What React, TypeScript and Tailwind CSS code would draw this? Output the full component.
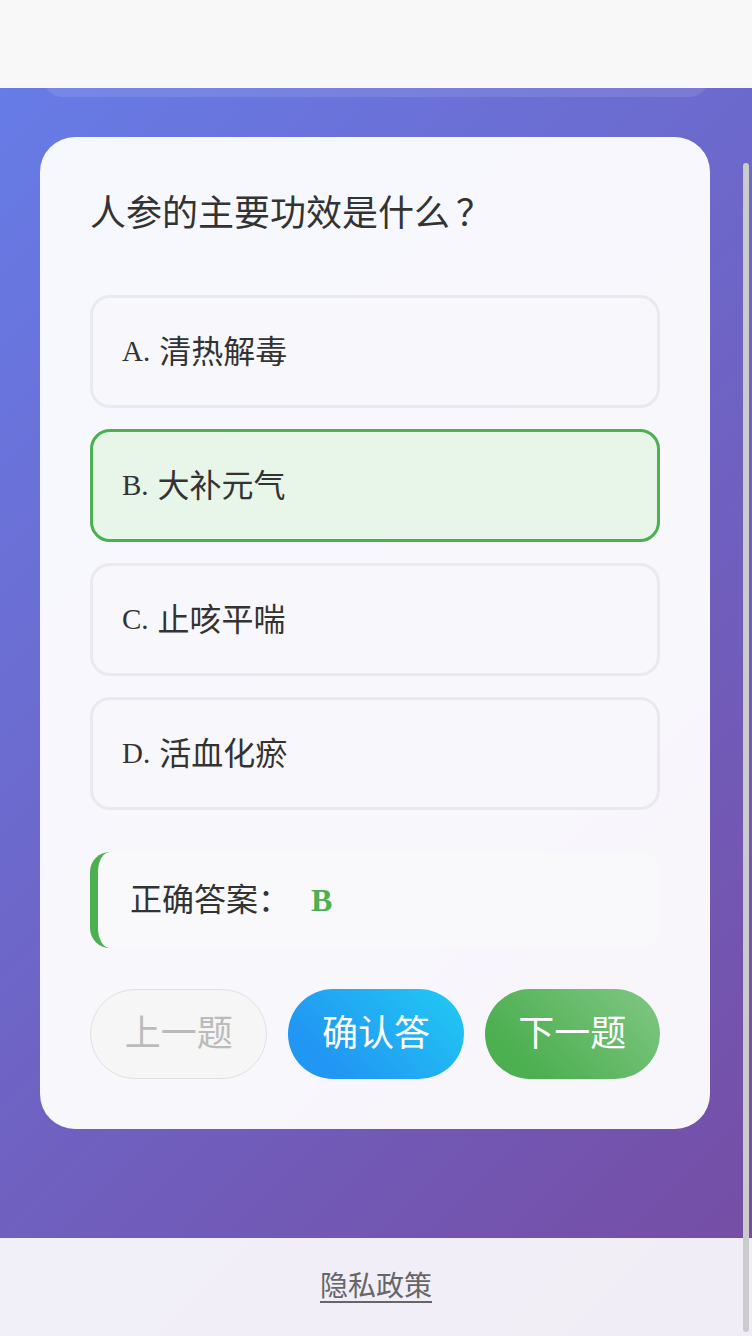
import React from "react";

const FONT = { fontFamily: '"Liberation Serif", "Noto Sans CJK SC", serif' };

const options = [
  { key: "A", text: "清热解毒", selected: false },
  { key: "B", text: "大补元气", selected: true },
  { key: "C", text: "止咳平喘", selected: false },
  { key: "D", text: "活血化瘀", selected: false },
];

export default function App() {
  return (
    <div
      className="relative min-h-[1336px] w-full flex flex-col bg-[linear-gradient(135deg,#667eea_0%,#764ba2_100%)] text-[#333]"
      style={FONT}
    >
      <div className="h-[88px] bg-[#f8f8f8]" />
      <div className="h-[9px] overflow-hidden ml-[43px] mr-[43px]">
        <div className="h-[40px] -mt-[31px] rounded-[20px] bg-white/10" />
      </div>

      <div className="mt-[40px] ml-[40px] mr-[42px] rounded-[35px] bg-white/95 p-[50px]">
        <h2 className="text-[36px] leading-[54px] font-normal text-[#333] mb-[54px]">
          人参的主要功效是什么<span className="ml-[6px]">？</span>
        </h2>

        <div className="flex flex-col gap-[21px]">
          {options.map((o) => (
            <div
              key={o.key}
              className={
                o.selected
                  ? "h-[113px] flex items-center rounded-[20px] border-[3px] border-[#4caf50] bg-[#e8f5e9] pl-[29px] text-[32px] text-[#333]"
                  : "h-[113px] flex items-center rounded-[20px] border-[3px] border-[#e9e9ee] bg-[#f8f8fc] pl-[29px] text-[32px] text-[#333]"
              }
            >
              <span className="text-[29px]">{o.key}.</span>
              <span className="ml-[9px]">{o.text}</span>
            </div>
          ))}
        </div>

        <div className="mt-[42px] h-[96px] rounded-[20px] border-l-[8px] border-[#4caf50] bg-[#f9f9fb] pl-[32px] text-[32px] flex items-center">
          <span className="text-[#333]">正确答案：</span>
          <span className="ml-[21px] font-bold text-[#4caf50]">B</span>
        </div>

        <div className="mt-[41px] flex gap-[21px]">
          <button
            className="flex-1 h-[90px] rounded-full border border-[#e0e0e0] bg-[#f6f6f6] text-[36px] text-[#bbbbbb] overflow-hidden"
            style={FONT}
          >
            上一题
          </button>
          <button
            className="flex-1 h-[90px] rounded-full bg-[linear-gradient(45deg,#2196f3_20%,#21cbf3_100%)] text-[36px] text-white overflow-hidden"
            style={FONT}
          >
            确认答
          </button>
          <button
            className="flex-1 h-[90px] rounded-full bg-[linear-gradient(45deg,#4caf50_20%,#81c784_100%)] text-[36px] text-white overflow-hidden"
            style={FONT}
          >
            下一题
          </button>
        </div>
      </div>

      <div className="flex-1 min-h-[109px]" />

      <div className="h-[98px] bg-white/90 flex items-center justify-center">
        <a className="text-[28px] text-[#666] underline underline-offset-[5px]">隐私政策</a>
      </div>

      <div className="absolute right-[3px] top-[163px] bottom-[4px] w-[6px] rounded-full bg-[#cbcbcb]" />
    </div>
  );
}
